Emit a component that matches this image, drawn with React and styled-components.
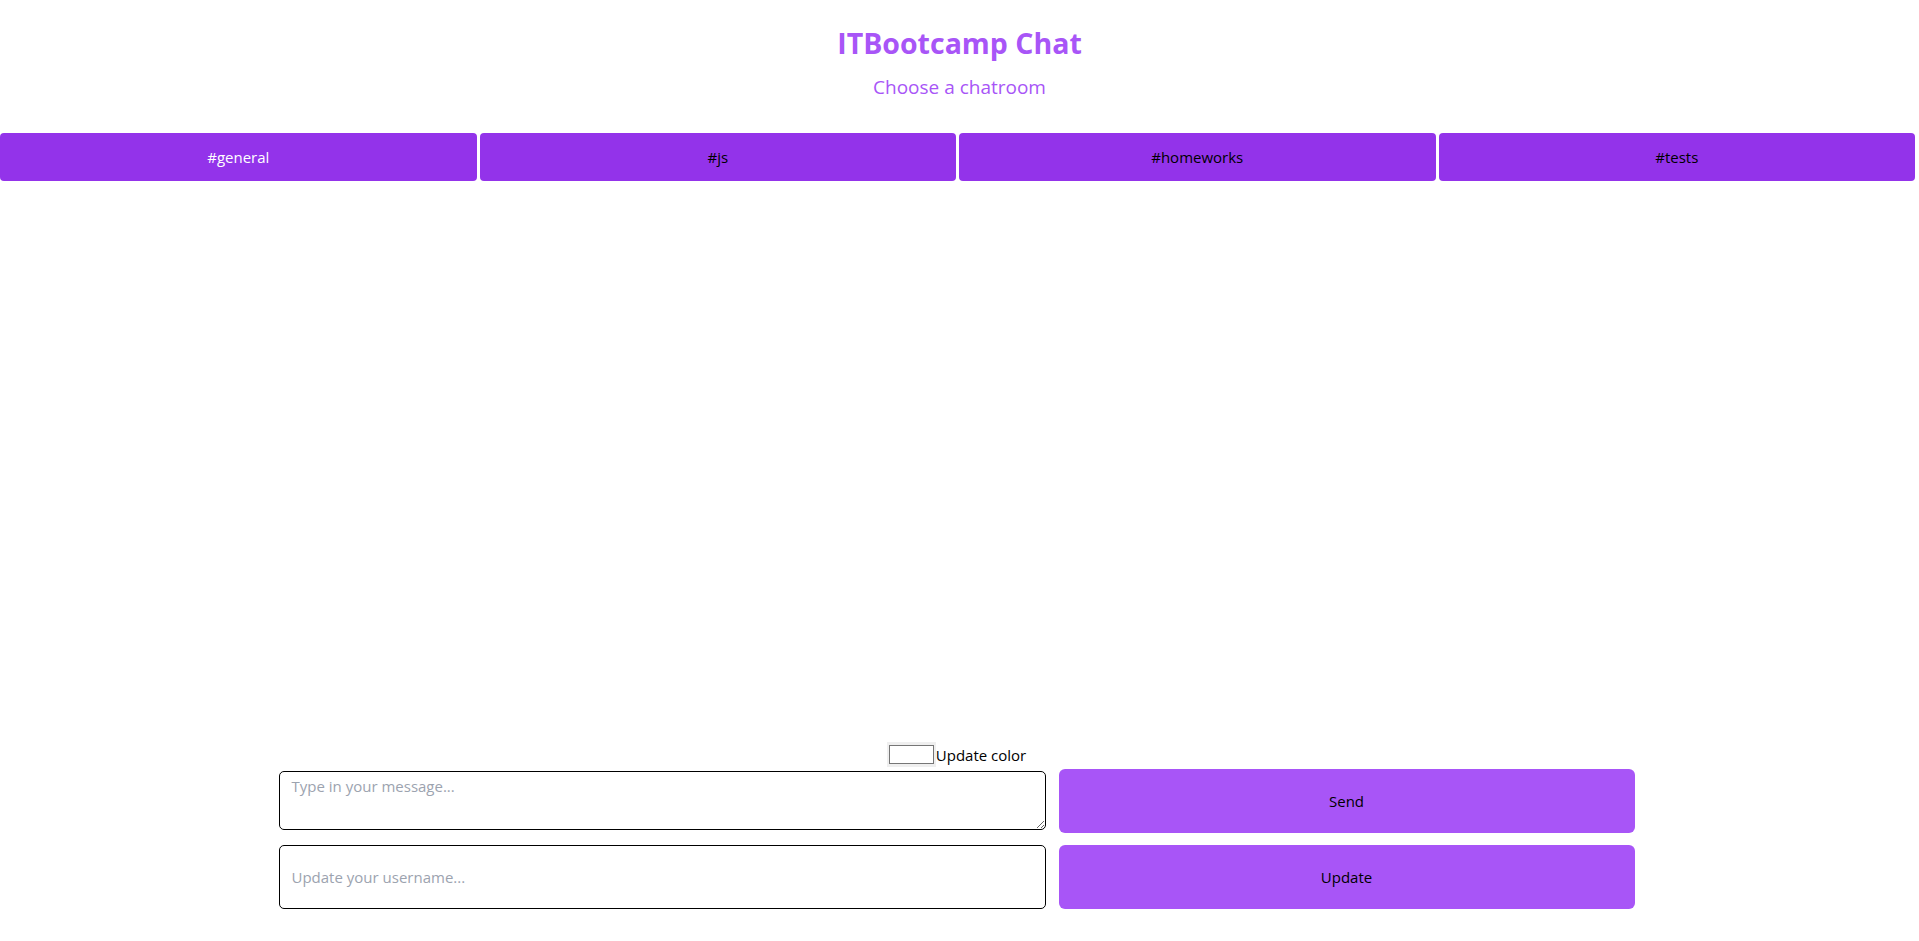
import React, { useState } from "react";
import styled, { createGlobalStyle } from "styled-components";

const GlobalStyle = createGlobalStyle`
  body {
    margin: 0;
    font-family: "Segoe UI", "Open Sans", "Noto Sans", sans-serif;
    background: #ffffff;
    color: #000000;
  }
`;

const Page = styled.div`
  display: flex;
  flex-direction: column;
  min-height: 941px;
`;

const Header = styled.header`
  display: flex;
  flex-direction: column;
  align-items: center;
  padding-top: 25px;
  color: #a855f7;
`;

const Title = styled.h1`
  margin: 0;
  font-size: 28.5px;
  line-height: 36px;
  font-weight: 700;
`;

const Subtitle = styled.p`
  margin: 13px 0 0;
  font-size: 19px;
  line-height: 26px;
`;

const Rooms = styled.nav`
  display: flex;
  gap: 3px;
  margin-top: 33px;
  padding-right: 4px;
`;

const RoomButton = styled.button`
  flex: 1;
  height: 48px;
  border: none;
  border-radius: 4px;
  background: #9333ea;
  color: ${(p) => (p.$active ? "#ffffff" : "#000000")};
  font-family: inherit;
  font-size: 15px;
  cursor: pointer;
`;

const ChatList = styled.ul`
  list-style: none;
  margin: 0;
  padding: 0;
  height: 561px;
`;

const Form = styled.section`
  width: 1356px;
  margin: 0 0 0 calc(50% - 681px);
  display: flex;
  flex-direction: column;
`;

const ColorRow = styled.div`
  display: flex;
  justify-content: center;
  align-items: center;
  height: 25px;
  font-size: 15px;
`;

const ColorInput = styled.input`
  width: 49px;
  height: 25px;
  padding: 0;
  border: none;
  background: #efefef;
  cursor: pointer;

  &::-webkit-color-swatch-wrapper {
    padding: 3px 2px;
  }
  &::-webkit-color-swatch {
    border: 1px solid #767676;
  }
`;

const FormGrid = styled.div`
  display: grid;
  grid-template-columns: 767px 1fr;
  column-gap: 13px;
  row-gap: 12px;
  margin-top: 2px;
`;

const MessageArea = styled.textarea`
  height: 59px;
  margin-top: 2px;
  box-sizing: border-box;
  border: 1px solid #000;
  border-radius: 5px;
  padding: 4px 12px;
  font-family: inherit;
  font-size: 15px;

  &::placeholder {
    color: #9ca3af;
  }
`;

const UsernameInput = styled.input`
  height: 64px;
  box-sizing: border-box;
  border: 1px solid #000;
  border-radius: 5px;
  padding: 0 12px;
  font-family: inherit;
  font-size: 15px;

  &::placeholder {
    color: #9ca3af;
  }
`;

const ActionButton = styled.button`
  height: 64px;
  border: none;
  border-radius: 6px;
  background: #a855f7;
  color: #000;
  font-family: inherit;
  font-size: 15px;
  cursor: pointer;
`;

const rooms = ["general", "js", "homeworks", "tests"];

export default function App() {
  const [room, setRoom] = useState("general");

  return (
    <Page>
      <GlobalStyle />
      <Header>
        <Title>ITBootcamp Chat</Title>
        <Subtitle>Choose a chatroom</Subtitle>
      </Header>
      <Rooms>
        {rooms.map((r) => (
          <RoomButton key={r} $active={r === room} onClick={() => setRoom(r)}>
            #{r}
          </RoomButton>
        ))}
      </Rooms>
      <ChatList />
      <Form>
        <ColorRow>
          <ColorInput type="color" defaultValue="#ffffff" />
          <span>Update color</span>
        </ColorRow>
        <FormGrid>
          <MessageArea placeholder="Type in your message..." />
          <ActionButton>Send</ActionButton>
          <UsernameInput placeholder="Update your username..." />
          <ActionButton>Update</ActionButton>
        </FormGrid>
      </Form>
    </Page>
  );
}
